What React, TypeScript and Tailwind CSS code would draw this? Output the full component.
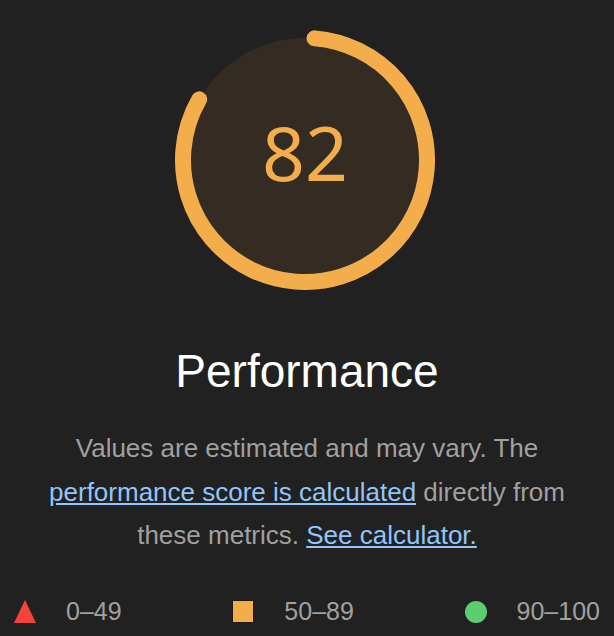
const score = 82;

function Gauge({ value }: { value: number }) {
  const r = 122;
  const circumference = 2 * Math.PI * r;
  const arc = (value / 100) * circumference;

  return (
    <div className="relative h-[260px] w-[260px]">
      <svg viewBox="0 0 260 260" className="absolute inset-0 h-full w-full">
        <circle cx="130" cy="130" r={r} fill="#342c22" />
        <circle
          cx="130"
          cy="130"
          r={r}
          fill="none"
          stroke="#f4ad4b"
          strokeWidth="16"
          strokeLinecap="round"
          strokeDasharray={`${arc} ${circumference}`}
          transform="rotate(-85.5 130 130)"
        />
      </svg>
      <div className="absolute inset-0 flex items-center justify-center pb-[16px]">
        <span className="text-[75px] leading-none text-[#f4ad4b] [font-family:'Noto_Sans',sans-serif]">
          {value}
        </span>
      </div>
    </div>
  );
}

export default function App() {
  return (
    <div className="flex h-[636px] w-[614px] flex-col items-center bg-[#212121] pt-[30px] [font-family:'Liberation_Sans',Arial,sans-serif]">
      <div className="mr-[4px]">
        <Gauge value={score} />
      </div>

      <h1 className="mt-[58px] text-[46px] leading-none text-white">
        Performance
      </h1>

      <p className="mt-[33px] w-[544px] text-center text-[26px] leading-[43.5px] text-[#a0a0a0]">
        Values are estimated and may vary. The{" "}
        <a href="#" className="text-[#92c5fa] underline underline-offset-2">
          performance score is calculated
        </a>{" "}
        directly from these metrics.{" "}
        <a href="#" className="text-[#92c5fa] underline underline-offset-2">
          See calculator.
        </a>
      </p>

      <div className="mt-auto mb-[12px] flex w-full items-center justify-between px-[14px] text-[25px] leading-none text-[#a0a0a0]">
        <div className="flex items-center gap-[30px]">
          <svg width="22" height="23" viewBox="0 0 22 23">
            <polygon points="11,0 22,23 0,23" fill="#f4443a" />
          </svg>
          <span>0–49</span>
        </div>
        <div className="flex items-center gap-[30px]">
          <span className="h-[23px] w-[22px] border border-[#1a1a1a] bg-[#f4ad4b]" />
          <span>50–89</span>
        </div>
        <div className="flex items-center gap-[30px]">
          <span className="h-[22px] w-[22px] rounded-full bg-[#5ccd6f]" />
          <span>90–100</span>
        </div>
      </div>
    </div>
  );
}
